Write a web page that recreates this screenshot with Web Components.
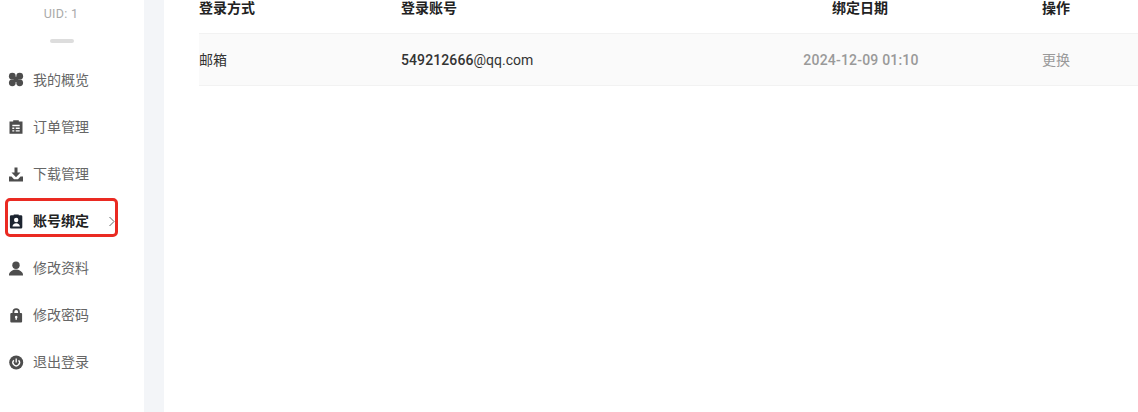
<!DOCTYPE html>
<html><head><meta charset="utf-8"><style>
html,body{margin:0;padding:0;background:#fff;height:412px;overflow:hidden}
body{font-family:"Roboto","Noto Sans CJK SC",sans-serif}
</style></head><body>
<template id="t-app"><style>
:host{display:flex;height:412px;width:1138px;overflow:hidden}
.gut{width:20px;background:#f3f5f8;flex:none}
main{flex:1;padding-left:35px;min-width:0}
</style><slot name="side"></slot><div class="gut"></div><main><slot></slot></main></template>

<template id="t-side"><style>
:host{display:flex;flex-direction:column;width:144px;flex:none;position:relative;background:#fff}
.uid{height:27px;line-height:28px;text-align:center;font-size:12.500px;letter-spacing:.3px;color:#aaa;width:122px;}
.dash{width:24px;height:4px;border-radius:2px;background:#ddd;margin:12px 0 13px 50px}
</style><div class="uid">UID: 1</div><div class="dash"></div><slot></slot></template>

<template id="t-item"><style>
:host{display:flex;align-items:center;height:47px;padding-left:8px;gap:9px;font-size:14px;color:#666;position:relative;box-sizing:border-box}
:host([active]){color:#222;font-weight:700}
.ic{width:16px;height:16px;display:flex;flex:none}
.tx{padding-bottom:2px}
:host([active]) .ring{position:absolute;left:4.500px;top:1px;width:113px;height:39px;box-sizing:border-box;border:3px solid #ea2a22;border-radius:5px}
.chev{display:none}
:host([active]) .chev{display:block;position:absolute;left:108px;top:19px}
</style><span class="ic"><slot name="icon"></slot></span><span class="tx"><slot></slot></span><span class="ring"></span>
<svg class="chev" width="8" height="11" viewBox="0 0 8 11"><path d="M1.500 1l4.500 4.500-4.500 4.500" fill="none" stroke="#666" stroke-width="1"/></svg></template>

<template id="t-table"><style>
:host{display:block}
</style><slot></slot></template>

<template id="t-row"><style>
:host{display:grid;grid-template-columns:202px 277px 364px 96px;align-items:start;line-height:17px;font-size:14px;height:33px;color:#222;font-weight:700;border-bottom:1px solid #f2f2f2}
:host([body]){height:51px;line-height:normal;align-items:center;background:#fafafa;font-weight:400;color:#333;border-bottom:1px solid #f2f2f2}
</style><slot></slot></template>

<template id="t-cell"><style>
:host{display:block;white-space:nowrap}
:host([cjk]){padding-bottom:2px}
:host([mute]){color:#999}
:host([center]){text-align:center}
:host([num]){font-weight:500;letter-spacing:.2px;padding-left:2px}
</style><slot></slot></template>

<x-app>
<x-side slot="side">
<x-item><svg slot="icon" width="16" height="16" viewBox="0 0 16 16" fill="#4d4d4d"><circle cx="4.300" cy="4.200" r="3.400"/><circle cx="11.700" cy="4.200" r="3.400"/><circle cx="4.300" cy="10.800" r="3.400"/><circle cx="11.700" cy="10.800" r="3.400"/><rect x="5.500" y="5" width="5" height="5"/></svg>我的概览</x-item>
<x-item><svg slot="icon" width="16" height="16" viewBox="0 0 16 16"><path fill="#4d4d4d" fill-rule="evenodd" d="M1.500 2.500h3.700V1.300h5.600v1.200h3.700v12.300h-13zM4.300 5.800v1.400h7.400V5.800zM4.300 8.600v1.400h2V8.600zM7.700 8.600v1.400h4V8.600zM4.300 11.200v1.400h2v-1.400zM7.700 11.200v1.400h4v-1.400z"/></svg>订单管理</x-item>
<x-item><svg slot="icon" width="16" height="16" viewBox="0 0 16 16"><path fill="#4d4d4d" d="M6.500 1.500h3v5h3L8 11.200 3.500 6.500h3zM1 10.500h2.500L6 13.200h4l2.500-2.700H15v5H1z"/></svg>下载管理</x-item>
<x-item active><svg slot="icon" width="16" height="16" viewBox="0 0 16 16"><path fill="#1c2430" fill-rule="evenodd" d="M3.200 2.300h2.500V1.500h5v.8h2.300a1.300 1.300 0 0 1 1.300 1.300v10.600a1.300 1.300 0 0 1-1.300 1.300H3.200a1.300 1.300 0 0 1-1.300-1.300V3.600a1.300 1.300 0 0 1 1.300-1.300zM8.200 4.800a2.200 2.200 0 1 0 0 4.400 2.200 2.200 0 0 0 0-4.400zM4.500 13.500h7.400c0-2-1.600-3.300-3.700-3.300s-3.700 1.300-3.700 3.300z"/></svg>账号绑定</x-item>
<x-item><svg slot="icon" width="16" height="16" viewBox="0 0 16 16"><circle cx="8" cy="5.200" r="3.700" fill="#4d4d4d"/><path fill="#4d4d4d" d="M1 15.500c0-1 0-2 .8-3C3 11 5 9.500 8 9.500s5 1.500 6.200 3c.8 1 .8 2 .8 3z"/></svg>修改资料</x-item>
<x-item><svg slot="icon" width="16" height="16" viewBox="0 0 16 16"><path fill="#4d4d4d" fill-rule="evenodd" d="M4.500 6V5a3.700 3.700 0 0 1 7.400 0v1h1.200a1 1 0 0 1 1 1v7.500a1 1 0 0 1-1 1H3.300a1 1 0 0 1-1-1V7a1 1 0 0 1 1-1zM6.300 6h3.800V5a1.900 1.900 0 0 0-3.800 0zM8.200 8.800a1.300 1.300 0 0 0-.7 2.400v1.600h1.400v-1.600a1.300 1.300 0 0 0-.7-2.400z"/></svg>修改密码</x-item>
<x-item><svg slot="icon" width="16" height="16" viewBox="0 0 16 16"><circle cx="8.200" cy="8.500" r="7" fill="#4d4d4d"/><path d="M5.800 6.200a3.300 3.300 0 1 0 4.800 0M8.200 4.500v4" fill="none" stroke="#fff" stroke-width="1.300"/></svg>退出登录</x-item>
</x-side>
<x-table>
<x-row><x-cell>登录方式</x-cell><x-cell>登录账号</x-cell><x-cell center>绑定日期</x-cell><x-cell>操作</x-cell></x-row>
<x-row body><x-cell cjk>邮箱</x-cell><x-cell><span style="font-weight:500;letter-spacing:.1px">549212666</span>@qq.com</x-cell><x-cell mute center num>2024-12-09 01:10</x-cell><x-cell mute cjk>更换</x-cell></x-row>
</x-table>
</x-app>
<script>
for(const [n,t] of [['x-app','t-app'],['x-side','t-side'],['x-item','t-item'],['x-table','t-table'],['x-row','t-row'],['x-cell','t-cell']]){
customElements.define(n,class extends HTMLElement{constructor(){super();this.attachShadow({mode:'open'}).appendChild(document.getElementById(t).content.cloneNode(true))}});
}
</script>
</body></html>
